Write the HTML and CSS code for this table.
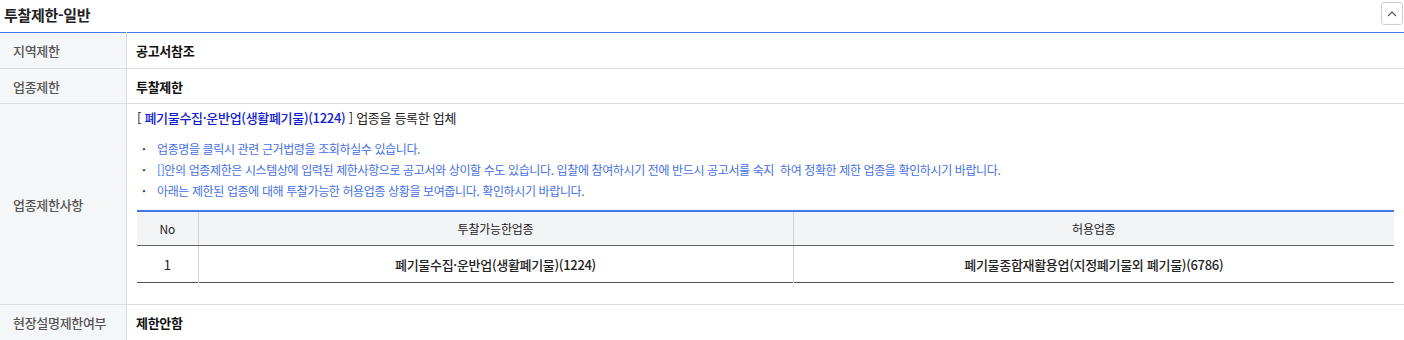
FILE: index.html
```html
<!DOCTYPE html>
<html lang="ko">
<head>
<meta charset="utf-8">
<title>투찰제한-일반</title>
<link rel="stylesheet" href="styles.css">
</head>
<body>
<div class="panel">
  <div class="title-bar">
    <h2 class="title">투찰제한-일반</h2>
    <button class="toggle" type="button" aria-label="접기">
      <svg width="10" height="6" viewBox="0 0 10 6"><path d="M1 5 L5 1 L9 5" fill="none" stroke="#555" stroke-width="1.1"/></svg>
    </button>
  </div>
  <table class="info">
    <tr class="r1">
      <th class="label">지역제한</th>
      <td class="value">공고서참조</td>
    </tr>
    <tr class="r2">
      <th class="label">업종제한</th>
      <td class="value">투찰제한</td>
    </tr>
    <tr class="r3">
      <th class="label">업종제한사항</th>
      <td class="detail">
        <p class="lead">[ <a class="biz" href="#">폐기물수집·운반업(생활폐기물)(1224)</a> ] 업종을 등록한 업체</p>
        <ul class="notes">
          <li>업종명을 클릭시 관련 근거법령을 조회하실수 있습니다.</li>
          <li>[]안의 업종제한은 시스템상에 입력된 제한사항으로 공고서와 상이할 수도 있습니다. 입찰에 참여하시기 전에 반드시 공고서를 숙지 &nbsp;하여 정확한 제한 업종을 확인하시기 바랍니다.</li>
          <li>아래는 제한된 업종에 대해 투찰가능한 허용업종 상황을 보여줍니다. 확인하시기 바랍니다.</li>
        </ul>
        <table class="sub">
          <colgroup>
            <col class="c-no">
            <col class="c-bid">
            <col class="c-allow">
          </colgroup>
          <thead>
            <tr>
              <th>No</th>
              <th>투찰가능한업종</th>
              <th>허용업종</th>
            </tr>
          </thead>
          <tbody>
            <tr>
              <td class="no">1</td>
              <td>폐기물수집·운반업(생활폐기물)(1224)</td>
              <td>폐기물종합재활용업(지정폐기물외 폐기물)(6786)</td>
            </tr>
          </tbody>
        </table>
      </td>
    </tr>
    <tr class="r4">
      <th class="label">현장설명제한여부</th>
      <td class="value">제한안함</td>
    </tr>
  </table>
</div>
</body>
</html>
```

FILE: styles.css
```css
html, body {
  margin: 0;
  padding: 0;
  background: #fff;
}
body {
  font-family: "Noto Sans CJK KR", "Noto Sans", sans-serif;
  color: #222;
  width: 1404px;
  height: 340px;
  overflow: hidden;
}
.panel {
  width: 1404px;
}
.title-bar {
  height: 32px;
  display: flex;
  align-items: center;
  justify-content: space-between;
  padding: 0 1px 0 4px;
  box-sizing: border-box;
}
.title {
  margin: 0;
  font-size: 15px;
  font-weight: 700;
  color: #222;
  letter-spacing: -0.3px;
  line-height: 20px;
  margin-top: -3px;
}
.toggle {
  width: 22px;
  height: 23px;
  margin-top: -5px;
  border: 1px solid #cfcfcf;
  border-radius: 3px;
  background: #fff;
  display: flex;
  align-items: center;
  justify-content: center;
  padding: 0;
}
.info {
  width: 100%;
  border-collapse: collapse;
  border-top: 1px solid #4577e6;
}
.info > tbody > tr > th,
.info > tbody > tr > td {
  border-bottom: 1px solid #dcdcdc;
}
.label {
  width: 113px;
  background: #f5f6f8;
  border-right: 1px solid #dcdcdc;
  text-align: left;
  padding: 0 0 0 13px;
  font-size: 13px;
  font-weight: 500;
  color: #555;
  letter-spacing: -0.3px;
}
.value {
  padding: 0 10px 0 9px;
  font-size: 13px;
  font-weight: 700;
  color: #111;
  letter-spacing: -0.3px;
}
.r1 { height: 36px; }
.r2 { height: 35px; }
.r4 { height: 36px; }
.detail {
  padding: 5px 10px 21px 10px;
  vertical-align: top;
}
.lead {
  margin: 0;
  font-size: 13px;
  line-height: 18px;
  color: #222;
  letter-spacing: -0.3px;
}
.biz {
  color: #1020d0;
  text-decoration: none;
  font-weight: 500;
}
.notes {
  list-style: none;
  margin: 11px 0 0 0;
  padding: 0;
}
.notes li {
  position: relative;
  padding-left: 20px;
  font-size: 12px;
  line-height: 21px;
  color: #4470e4;
  letter-spacing: -0.38px;
}
.notes li::before {
  content: "·";
  position: absolute;
  left: 5px;
  top: 0;
  color: #444;
  font-weight: 700;
}
.sub {
  width: 100%;
  table-layout: fixed;
  margin-top: 9px;
  border-collapse: collapse;
  border-top: 2px solid #4577e6;
  border-bottom: 1px solid #555;
  font-size: 12px;
  letter-spacing: -0.2px;
}
.c-no { width: 61px; }
.c-bid { width: 595px; }
.c-allow { width: auto; }
.sub thead th {
  height: 33px;
  background: #f3f4f6;
  font-weight: 400;
  color: #222;
  border-bottom: 1px solid #666;
  border-left: 1px solid #d4d4d4;
  padding: 0;
}
.sub tbody td {
  height: 36px;
  text-align: center;
  color: #222;
  font-size: 13px;
  letter-spacing: -0.3px;
  font-weight: 500;
  border-left: 1px solid #d4d4d4;
  padding: 0;
}
.sub th:first-child,
.sub td:first-child {
  border-left: none;
}
.sub tbody td.no {
  font-weight: 400;
}
```
